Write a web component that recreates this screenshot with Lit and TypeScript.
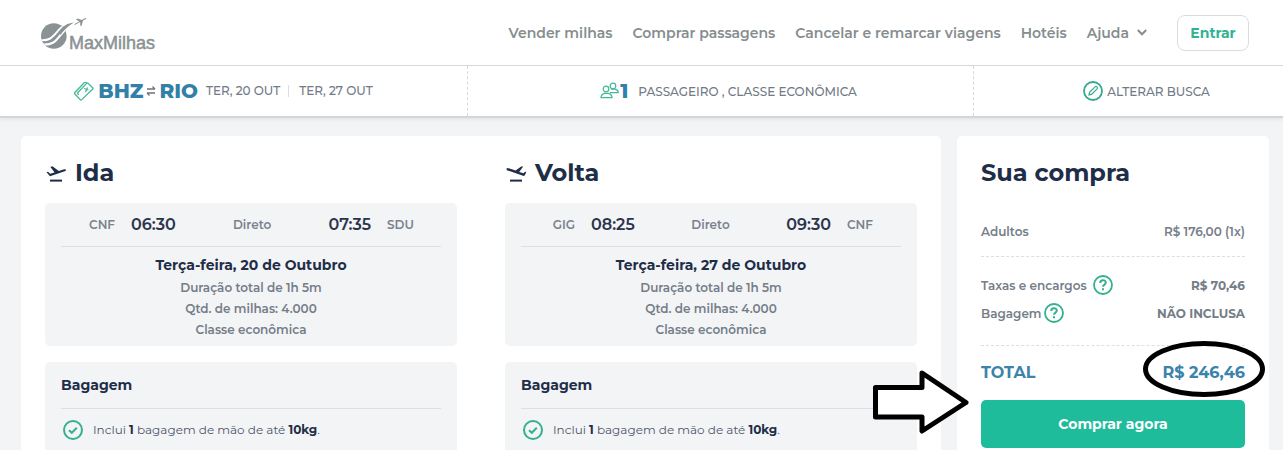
import { LitElement, html, svg, css } from "lit";
import { customElement, property } from "lit/decorators.js";

const takeoff = svg`<path d="M1.500 10.200 3 9.800 5.200 11.800 9.600 10.400 5.400 5 7.400 4.200 13.800 9 18.400 7.500C20 7 21 7.200 21 8 21 8.800 20 9.200 19 9.600L5 14.200Z"/><path d="M5 17.600h12v2H5z"/>`;
const landing = svg`<path d="M1.500 6.400 2.400 5.900 10.600 8.600 16.200 4.400 18.200 4.600 14.200 9.900 18.600 11.300 20.200 9.600 21.200 10.200 19.800 13.200C19.400 13.900 18.800 14 18 13.800L1.800 8.200Z"/><path d="M5 17.600h12v2H5z"/>`;

interface Flight {
  title: string;
  landing: boolean;
  from: string;
  departure: string;
  arrival: string;
  to: string;
  date: string;
}

const flights: Flight[] = [
  { title: "Ida", landing: false, from: "CNF", departure: "06:30", arrival: "07:35", to: "SDU", date: "Terça-feira, 20 de Outubro" },
  { title: "Volta", landing: true, from: "GIG", departure: "08:25", arrival: "09:30", to: "CNF", date: "Terça-feira, 27 de Outubro" },
];

@customElement("site-header")
class SiteHeader extends LitElement {
  static styles = css`
    :host { display: block; background: #fff; border-bottom: 1px solid #d5d8da; }
    .bar { display: flex; align-items: center; justify-content: space-between; height: 65px; padding: 0 34px 0 40px; }
    .logo { display: block; }
    .logo-text { font: 18px "Liberation Sans", sans-serif; fill: #8a9294; stroke: #8a9294; stroke-width: 0.5px; }
    nav { display: flex; align-items: center; gap: 20px; }
    a { color: #858d8f; text-decoration: none; font-size: 14px; font-weight: 600; white-space: nowrap; }
    .help { display: flex; align-items: center; gap: 8px; }
    .login { margin-left: 10px; box-sizing: border-box; width: 72px; height: 36px; border: 1px solid #dadddf; border-radius: 8px; background: #fff; color: #2fb394; font: inherit; font-size: 14px; font-weight: 700; padding: 0; }
  `;
  render() {
    return html`
      <header class="bar">
        <a href="#" aria-label="MaxMilhas">
          <svg class="logo" width="120" height="40" viewBox="0 0 120 40">
            <clipPath id="globe"><circle cx="13.800" cy="23" r="12.800"/></clipPath>
            <circle cx="13.800" cy="23" r="12.800" fill="#8a9294"/>
            <g clip-path="url(#globe)" fill="none" stroke="#fff">
              <path d="M-1 27C15 29.500 14 17 27 11" stroke-width="2"/>
              <path d="M1 31.500C19 33.500 18 20 29 14" stroke-width="2.200"/>
            </g>
            <path d="M18.500 19C22.500 13 27 10.500 34 9.500 28.500 12.500 25 16 20.500 22Z" fill="#8a9294"/>
            <path d="m34 11.200 5.300-2.800-3.300-2 1.400-.8 4.500 1.300 2.500-1.400c1.300-.7 2.600-.4 1.300.6l-2.800 1.700-1.200 4.700-1.300.7-.2-4.200-5 2.800Z" fill="#8a9294"/>
            <text class="logo-text" x="29" y="36">MaxMilhas</text>
          </svg>
        </a>
        <nav>
          <a href="#">Vender milhas</a>
          <a href="#">Comprar passagens</a>
          <a href="#">Cancelar e remarcar viagens</a>
          <a href="#">Hotéis</a>
          <a href="#" class="help">Ajuda
            <svg width="10" height="7" viewBox="0 0 10 7" fill="none" stroke="#858d8f" stroke-width="2"><path d="m.8 1 4.200 4.300L9.200 1"/></svg>
          </a>
          <button class="login">Entrar</button>
        </nav>
      </header>`;
  }
}

@customElement("search-summary")
class SearchSummary extends LitElement {
  static styles = css`
    :host { display: block; background: #fff; border-bottom: 2px solid #d3d5d7; box-shadow: 0 2px 3px #e4e6e9; }
    .bar { display: grid; grid-template-columns: 467fr 506fr 310fr; height: 50px; font-size: 12px; font-weight: 500; color: #727a85; white-space: nowrap; }
    .cell { display: flex; align-items: center; justify-content: center; }
    .cell + .cell { border-left: 1px dashed #d5d8dc; padding-left: 16px; }
    .cell.edit { padding-left: 36px; }
    .trip { padding-right: 20px; }
    .code { font-size: 20px; font-weight: 800; color: #3180a8; }
    .ticket { margin-right: 4px; }
    .swap { margin: 0 3px; }
    .date { margin-left: 8px; line-height: 12px; }
    .date + .date { border-left: 1px solid #dcdfe2; padding-left: 10px; }
    .class { margin-left: 10px; }
    a { display: flex; align-items: center; gap: 4px; color: inherit; text-decoration: none; }
  `;
  render() {
    return html`
      <div class="bar">
        <div class="cell trip">
          <svg class="ticket" width="20" height="20" viewBox="0 0 20 20" fill="none" stroke="#43b896" stroke-width="1.300">
            <path d="M.9 11.500 10.200 1.800c.6-.6 1.100-.7 1.700-.2l1.300 1.200M.9 11.500c-.4.500-.4 1 0 1.500l5.300 5.600c.5.500 1 .5 1.500 0L18.500 8.300c.6-.6.6-1.100.1-1.600l-4.400-4.300c-.5-.5-1-.5-1.500 0L3.200 12.200M3.200 12.200l1.500 1.500"/>
            <path d="m10 7.500 4.500 1.500M13.500 6.500l-2 4.500"/>
          </svg>
          <span class="code">BHZ</span>
          <svg class="swap" width="10" height="12" viewBox="0 0 10 12" fill="none" stroke="#6d7278" stroke-width="1.300"><path d="M1 4h8M6.500 1.500 9 4M9 8H1M3.500 10.500 1 8"/></svg>
          <span class="code">RIO</span>
          <span class="date">TER, 20 OUT</span>
          <span class="date">TER, 27 OUT</span>
        </div>
        <div class="cell">
          <svg width="20" height="18" viewBox="0 0 20 18" fill="none" stroke="#43b896" stroke-width="1.200">
            <circle cx="13" cy="4" r="2.800"/><circle cx="6" cy="7" r="2.800"/>
            <path d="M9.800 10.600h8.500c0-1.800-1.600-3-3.300-3.400h-4M1 15.600h11c0-2.200-1.600-3.600-3.600-4.200H4.600C2.600 12 1 13.400 1 15.600Z"/>
          </svg>
          <span class="code">1</span>
          <span class="class">PASSAGEIRO , CLASSE ECONÔMICA</span>
        </div>
        <div class="cell edit">
          <a href="#">
            <svg width="20" height="20" viewBox="0 0 20 20" fill="none" stroke="#35a98c"><circle cx="10" cy="10" r="9" stroke-width="1.800"/><path d="m6 14 .7-3 5.600-5.400c1-.8 2.800.9 2 2L8.800 13.200 6 14Z" stroke-width="1.200"/></svg>
            ALTERAR BUSCA
          </a>
        </div>
      </div>`;
  }
}

@customElement("flight-column")
class FlightColumn extends LitElement {
  @property({ attribute: false }) flight!: Flight;
  static styles = css`
    :host { display: flex; flex-direction: column; gap: 16px; }
    h2 { display: flex; align-items: center; gap: 8px; margin: 0; font-size: 24px; line-height: 28px; font-weight: 700; color: #1f2e48; }
    .box { background: #f3f4f6; border-radius: 5px; padding: 0 16px; }
    .details { padding-bottom: 6px; text-align: center; }
    .bags { flex: 1; border-radius: 5px 5px 0 0; }
    .route { display: grid; grid-template-columns: 54px auto 1fr auto 54px; column-gap: 16px; align-items: center; height: 43px; border-bottom: 1px solid #dcdfe3; margin-bottom: 7px; font-size: 12px; color: #7a828d; font-weight: 600; }
    .from { text-align: right; }
    .to { text-align: left; }
    .time { font-size: 16px; font-weight: 600; color: #2b344b; }
    .date { font-size: 14px; line-height: 23px; font-weight: 700; color: #1f2e48; }
    p { margin: 0; font-size: 12px; line-height: 21px; font-weight: 600; color: #747d88; }
    h3 { margin: 0; font-size: 14px; line-height: 46px; font-weight: 700; color: #1f2e48; border-bottom: 1px solid #dcdfe3; }
    .bag { display: flex; align-items: center; gap: 9px; padding: 9px 1px 8px; line-height: 24px; font-weight: 400; color: #4d566a; }
    b { color: #1f2e48; }
  `;
  render() {
    const f = this.flight;
    return html`
      <h2><svg width="22" height="22" viewBox="0 0 22 22" fill="#1f2e48">${f.landing ? landing : takeoff}</svg>${f.title}</h2>
      <section class="box details">
        <div class="route">
          <span class="from">${f.from}</span><span class="time">${f.departure}</span>
          <span>Direto</span>
          <span class="time">${f.arrival}</span><span class="to">${f.to}</span>
        </div>
        <div class="date">${f.date}</div>
        <p>Duração total de 1h 5m</p>
        <p>Qtd. de milhas: 4.000</p>
        <p>Classe econômica</p>
      </section>
      <section class="box bags">
        <h3>Bagagem</h3>
        <p class="bag">
          <svg width="22" height="22" viewBox="0 0 22 22" fill="none" stroke="#35b08f" stroke-width="2"><circle cx="11" cy="11" r="9"/><path d="m7 11.200 2.800 2.600 5-5"/></svg>
          <span>Inclui <b>1</b> bagagem de mão de até <b>10kg</b>.</span>
        </p>
      </section>`;
  }
}

@customElement("purchase-summary")
class PurchaseSummary extends LitElement {
  static styles = css`
    :host { display: block; }
    h2 { margin: 0 0 32px; font-size: 24px; line-height: 28px; font-weight: 700; color: #1f2e48; }
    dl { margin: 0; font-size: 12px; font-weight: 600; color: #747d88; }
    .row { display: flex; align-items: center; justify-content: space-between; height: 28px; }
    .adults { height: 24px; padding-bottom: 13px; }
    .fees { border: 1px dashed #dcdfe2; border-width: 1px 0; padding: 14px 0 18px; }
    dt { display: flex; align-items: center; }
    dd { margin: 0; }
    .strong { font-weight: 700; }
    .hint { padding: 0; border: 0; background: none; height: 20px; margin-left: 2px; }
    .hint.apart { margin-left: 6px; }
    .total { height: 52px; padding-bottom: 2px; font-size: 16px; font-weight: 700; color: #3b83ab; }
    .price { position: relative; }
    .ring { position: absolute; left: 50%; top: 50%; transform: translate(-50%, -50%); margin-top: -3px; }
    .action { position: relative; }
    .arrow { position: absolute; right: 100%; bottom: 13px; margin-right: 11px; }
    .buy { display: block; width: 100%; height: 48px; border: 0; border-radius: 5px; background: #1fbc9c; color: #fff; font: inherit; font-size: 14px; font-weight: 700; }
  `;
  hint(label: string, extra = "") {
    return html`<button class="hint ${extra}" aria-label=${label}>
      <svg width="20" height="20" viewBox="0 0 20 20" fill="none" stroke="#35b08f" stroke-width="2"><circle cx="10" cy="10" r="9" stroke-width="1.800"/><path d="M7.200 8c0-3.700 5.600-3.700 5.600-.4 0 2-2.800 2-2.800 4.200M10 13.300v2"/></svg>
    </button>`;
  }
  render() {
    return html`
      <h2>Sua compra</h2>
      <dl>
        <div class="row adults"><dt>Adultos</dt><dd>R$ 176,00 (1x)</dd></div>
        <div class="fees">
          <div class="row"><dt>Taxas e encargos ${this.hint("Taxas e encargos", "apart")}</dt><dd class="strong">R$ 70,46</dd></div>
          <div class="row"><dt>Bagagem ${this.hint("Bagagem")}</dt><dd class="strong">NÃO INCLUSA</dd></div>
        </div>
        <div class="row total">
          <dt>TOTAL</dt>
          <dd class="price">R$ 246,46
            <svg class="ring" width="124" height="58" viewBox="0 0 124 58" fill="none" stroke="#000" stroke-width="5"><ellipse cx="62" cy="29" rx="58.500" ry="25.500"/></svg>
          </dd>
        </div>
      </dl>
      <div class="action">
        <button class="buy">Comprar agora</button>
        <svg class="arrow" width="98" height="66" viewBox="0 0 98 66" fill="#fff" stroke="#000" stroke-width="5" stroke-linejoin="round"><path d="M3.500 18.500H50V4L94 33.500 50 62V48H3.500Z"/></svg>
      </div>`;
  }
}

@customElement("app-root")
class AppRoot extends LitElement {
  static styles = css`
    :host { display: flex; flex-direction: column; min-height: 100vh; background: #f2f4f6; font-family: Montserrat, Inter, sans-serif; }
    main { flex: 1; display: grid; grid-template-columns: 1fr 312px; gap: 16px; padding: 18px 14px 0 21px; }
    .card { background: #fff; border-radius: 5px 5px 0 0; padding: 23px 24px 0; }
    .flights { display: grid; grid-template-columns: 1fr 1fr; gap: 48px; }
  `;
  render() {
    return html`
      <site-header></site-header>
      <search-summary></search-summary>
      <main>
        <div class="card flights">${flights.map((f) => html`<flight-column .flight=${f}></flight-column>`)}</div>
        <purchase-summary class="card"></purchase-summary>
      </main>`;
  }
}
